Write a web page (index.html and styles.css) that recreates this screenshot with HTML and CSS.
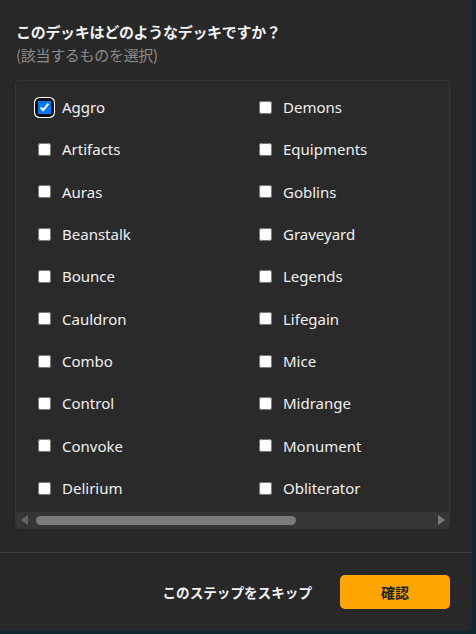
FILE: index.html
```html
<!DOCTYPE html>
<html lang="ja">
<head>
<meta charset="utf-8">
<title>デッキタイプ選択</title>
<link rel="stylesheet" href="styles.css">
</head>
<body>
<div class="dialog">
  <div class="header">
    <div class="title">このデッキはどのようなデッキですか？</div>
    <div class="subtitle">(該当するものを選択)</div>
  </div>
  <div class="panel">
    <div class="viewport">
      <div class="grid">
        <label class="item"><span class="focus-ring"><input type="checkbox" class="cb" checked></span><span class="text">Aggro</span></label>
        <label class="item"><input type="checkbox" class="cb"><span class="text">Artifacts</span></label>
        <label class="item"><input type="checkbox" class="cb"><span class="text">Auras</span></label>
        <label class="item"><input type="checkbox" class="cb"><span class="text">Beanstalk</span></label>
        <label class="item"><input type="checkbox" class="cb"><span class="text">Bounce</span></label>
        <label class="item"><input type="checkbox" class="cb"><span class="text">Cauldron</span></label>
        <label class="item"><input type="checkbox" class="cb"><span class="text">Combo</span></label>
        <label class="item"><input type="checkbox" class="cb"><span class="text">Control</span></label>
        <label class="item"><input type="checkbox" class="cb"><span class="text">Convoke</span></label>
        <label class="item"><input type="checkbox" class="cb"><span class="text">Delirium</span></label>
        <label class="item"><input type="checkbox" class="cb"><span class="text">Demons</span></label>
        <label class="item"><input type="checkbox" class="cb"><span class="text">Equipments</span></label>
        <label class="item"><input type="checkbox" class="cb"><span class="text">Goblins</span></label>
        <label class="item"><input type="checkbox" class="cb"><span class="text">Graveyard</span></label>
        <label class="item"><input type="checkbox" class="cb"><span class="text">Legends</span></label>
        <label class="item"><input type="checkbox" class="cb"><span class="text">Lifegain</span></label>
        <label class="item"><input type="checkbox" class="cb"><span class="text">Mice</span></label>
        <label class="item"><input type="checkbox" class="cb"><span class="text">Midrange</span></label>
        <label class="item"><input type="checkbox" class="cb"><span class="text">Monument</span></label>
        <label class="item"><input type="checkbox" class="cb"><span class="text">Obliterator</span></label>
      </div>
    </div>
    <div class="hscroll">
      <div class="arrow-btn"><span class="arrow-left"></span></div>
      <div class="track"><div class="thumb"></div></div>
      <div class="arrow-btn"><span class="arrow-right"></span></div>
    </div>
  </div>
  <div class="footer">
    <button class="skip" type="button">このステップをスキップ</button>
    <button class="confirm" type="button">確認</button>
  </div>
</div>
</body>
</html>
```

FILE: styles.css
```css
html, body {
  margin: 0;
  padding: 0;
}

body {
  background: #0f2830;
  font-family: "Noto Sans", "Noto Sans CJK JP", sans-serif;
}

.dialog {
  width: 472px;
  height: 631px;
  background: #282828;
  border-bottom-right-radius: 6px;
  display: flex;
  flex-direction: column;
  box-sizing: border-box;
}

.header {
  padding: 20px 16px 0;
  font-family: "Noto Sans CJK JP", sans-serif;
  font-size: 15px;
  line-height: 23px;
  letter-spacing: -0.3px;
}

.title {
  color: #f2f2f2;
  font-weight: 700;
}

.subtitle {
  color: #8c8c8c;
  font-weight: 400;
}

.panel {
  margin: 14px 22px 0 15px;
  border: 1px solid #363636;
  border-radius: 4px;
  overflow: hidden;
  background: #2a2a2a;
}

.viewport {
  overflow: hidden;
}

.grid {
  width: 666px;
  box-sizing: border-box;
  padding: 5px 0 3px 22px;
  display: grid;
  grid-auto-flow: column;
  grid-template-rows: repeat(10, 42.33px);
  grid-template-columns: 221px 221px;
}

.item {
  display: flex;
  align-items: center;
  gap: 11px;
  color: #f0f0f0;
  font-size: 15px;
}

.cb {
  width: 13px;
  height: 13px;
  margin: 0;
  flex: none;
}

.focus-ring {
  display: inline-flex;
  width: 13px;
  height: 13px;
  border-radius: 2px;
  box-shadow: 0 0 0 3px #101010, 0 0 0 4px #ffffff;
}

.hscroll {
  display: flex;
  align-items: center;
  height: 16px;
  background: #363636;
}

.arrow-btn {
  width: 16px;
  height: 16px;
  display: flex;
  align-items: center;
  justify-content: center;
  flex: none;
}

.arrow-left {
  width: 0;
  height: 0;
  border-top: 5px solid transparent;
  border-bottom: 5px solid transparent;
  border-right: 7px solid #666666;
}

.arrow-right {
  width: 0;
  height: 0;
  border-top: 5px solid transparent;
  border-bottom: 5px solid transparent;
  border-left: 7px solid #7c7c7c;
}

.track {
  flex: 1;
  display: flex;
  align-items: center;
  padding-left: 4px;
}

.thumb {
  width: 260px;
  height: 9px;
  border-radius: 5px;
  background: #7b7b7b;
}

.footer {
  margin-top: 23px;
  border-top: 1px solid #3c3c3c;
  padding: 22px 22px 0;
  display: flex;
  justify-content: flex-end;
  align-items: center;
  gap: 12px;
}

.skip {
  background: transparent;
  border: none;
  color: #f2f2f2;
  font-family: "Noto Sans CJK JP", sans-serif;
  font-weight: 700;
  font-size: 13.6px;
  padding: 0 16px;
  height: 34px;
}

.confirm {
  width: 110px;
  height: 34px;
  background: #ffa500;
  border: none;
  border-radius: 5px;
  color: #1c1c1c;
  font-family: "Noto Sans CJK JP", sans-serif;
  font-weight: 700;
  font-size: 14px;
  padding: 0;
}
```
